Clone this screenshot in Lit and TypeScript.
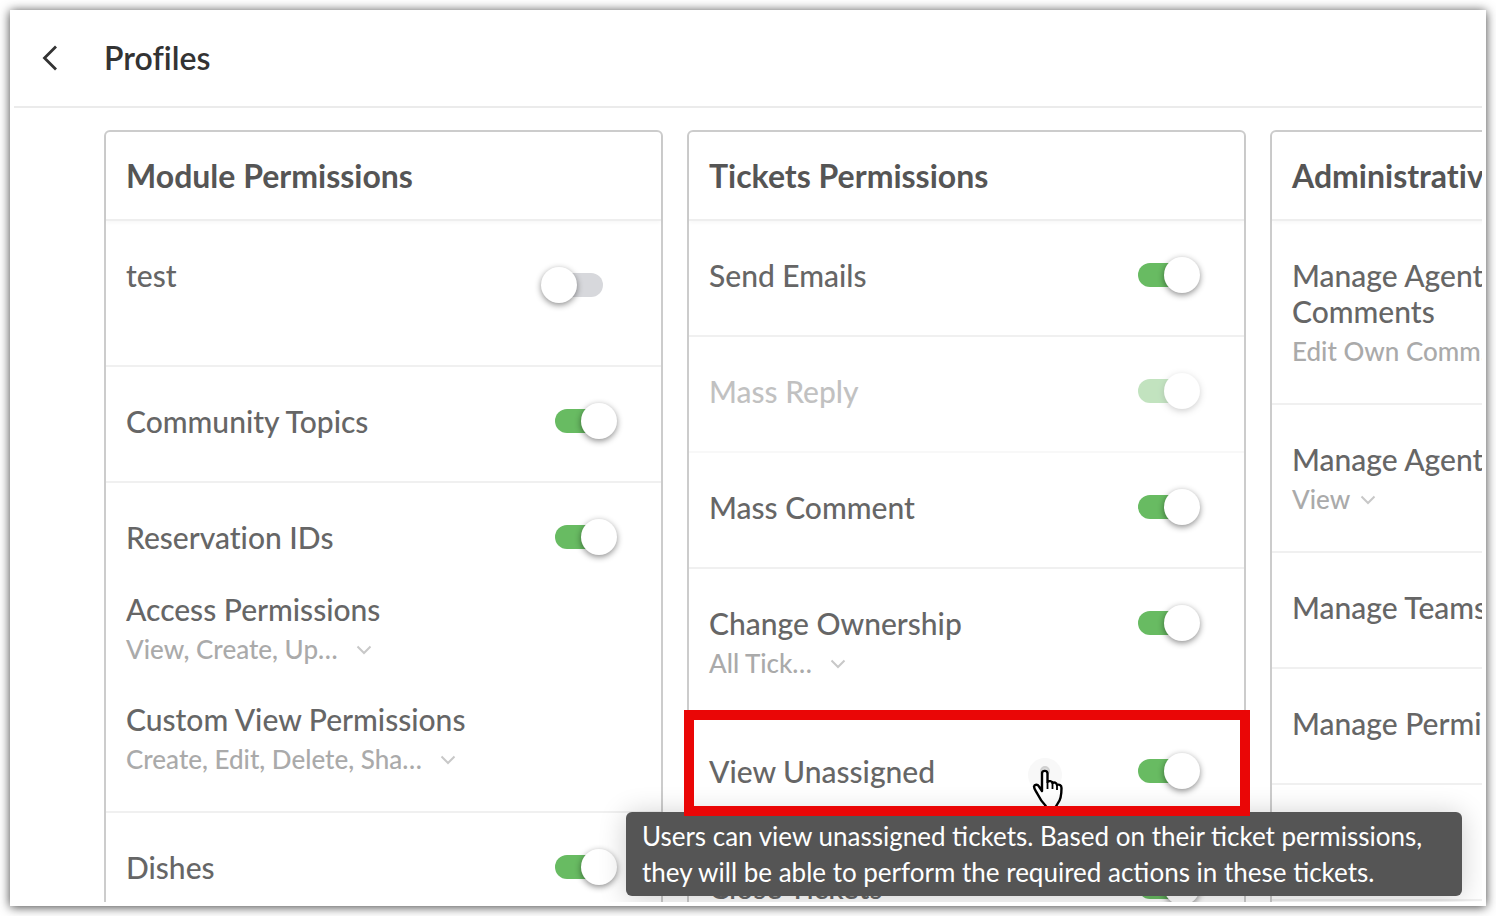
import { LitElement, html, css, svg, nothing } from "lit";
import { customElement, property } from "lit/decorators.js";

interface Entry {
  name: string;
  value?: string;
  fit?: boolean;
}
interface Permission extends Entry {
  on?: boolean;
  disabled?: boolean;
  offset?: boolean;
  tip?: string;
  extra?: Entry[];
}
interface Group {
  title: string;
  rows: Permission[];
}

const groups: Group[] = [
  {
    title: "Module Permissions",
    rows: [
      { name: "test", on: false, offset: true },
      { name: "Community Topics", on: true },
      {
        name: "Reservation IDs",
        on: true,
        extra: [
          { name: "Access Permissions", value: "View, Create, Up…" },
          { name: "Custom View Permissions", value: "Create, Edit, Delete, Sha…" },
        ],
      },
      { name: "Dishes", on: true },
    ],
  },
  {
    title: "Tickets Permissions",
    rows: [
      { name: "Send Emails", on: true },
      { name: "Mass Reply", on: true, disabled: true },
      { name: "Mass Comment", on: true },
      { name: "Change Ownership", on: true, value: "All Tick…" },
      {
        name: "View Unassigned",
        on: true,
        tip: "Users can view unassigned tickets. Based on their ticket permissions, they will be able to perform the required actions in these tickets.",
      },
      { name: "Close Tickets", on: true },
    ],
  },
  {
    title: "Administrative",
    rows: [
      { name: "Manage Agent\nComments", on: true, value: "Edit Own Comm…" },
      { name: "Manage Agents", on: true, value: "View", fit: true },
      { name: "Manage Teams", on: true },
      { name: "Manage Permissions", on: true },
      { name: "", on: true },
      { name: "", on: true },
    ],
  },
];

const chevron = svg`<svg class="chevron" width="16" height="12" viewBox="0 0 16 12" aria-hidden="true">
  <path d="M1.500 3.500 L8 10 L14.500 3.500" fill="none" stroke="#c8c8c8" stroke-width="2"/>
</svg>`;

@customElement("permission-row")
class PermissionRow extends LitElement {
  @property({ attribute: false }) item!: Permission;

  static styles = css`
    :host {
      display: block;
      position: relative;
    }
    .row {
      box-sizing: border-box;
      display: flex;
      justify-content: space-between;
      align-items: flex-start;
      min-height: 116px;
      padding: 36px 44px 36px 20px;
      border-bottom: 2px solid #f0f0f0;
    }
    .row.offset {
      min-height: 146px;
      padding-right: 58px;
    }
    .row.offset .switch {
      margin-top: 10px;
    }
    .row.disabled {
      opacity: 0.4;
    }
    .entries {
      display: grid;
      gap: 36px;
      max-width: 360px;
    }
    .name {
      display: block;
      font-size: 30px;
      font-weight: 500;
      line-height: 36px;
      color: #666;
      white-space: pre-line;
    }
    .picker {
      display: flex;
      align-items: center;
      gap: 18px;
      margin-top: 6px;
      padding: 0;
      border: 0;
      background: none;
      font: inherit;
      font-size: 26px;
      font-weight: 500;
      line-height: 32px;
      color: #aaa;
      white-space: nowrap;
    }
    .picker.fit {
      gap: 10px;
    }
    .switch {
      position: relative;
      flex: none;
      width: 62px;
      height: 36px;
    }
    .switch input {
      appearance: none;
      display: block;
      width: 54px;
      height: 24px;
      margin: 6px 0 6px 8px;
      border-radius: 12px;
      background: #d7d8dc;
    }
    .switch input:checked {
      margin-left: 0;
      background: #68bb62;
    }
    .switch input::after {
      content: "";
      position: absolute;
      left: 0;
      top: 0;
      width: 36px;
      height: 36px;
      border-radius: 50%;
      background: #fff;
      box-shadow: 0 2px 6px rgba(0, 0, 0, 0.45);
    }
    .switch input:checked::after {
      left: 26px;
    }
    .info {
      position: absolute;
      left: 339px;
      top: 41px;
      width: 36px;
      height: 48px;
    }
    .highlight {
      position: absolute;
      inset: -7px -6px 17px -5px;
      z-index: 3;
      border: 10px solid #ea0606;
      pointer-events: none;
    }
    .tip {
      position: absolute;
      left: -63px;
      top: 95px;
      z-index: 2;
      box-sizing: border-box;
      width: 836px;
      padding: 6px 16px;
      border-radius: 6px;
      background: #555;
      color: #fff;
      font-size: 26px;
      line-height: 36px;
      font-variant-ligatures: normal;
      box-shadow: 0 2px 28px rgba(0, 0, 0, 0.2);
    }
  `;

  private entry(e: Entry, forId?: string) {
    return html`<div>
      ${forId ? html`<label class="name" for=${forId}>${e.name}</label>` : html`<span class="name">${e.name}</span>`}
      ${e.value
        ? html`<button class="picker ${e.fit ? "fit" : ""}" aria-label="${e.name}: ${e.value}">${e.value}${chevron}</button>`
        : nothing}
    </div>`;
  }

  render() {
    const p = this.item;
    return html`
      <div class="row ${p.offset ? "offset" : ""} ${p.disabled ? "disabled" : ""}">
        <div class="entries">${this.entry(p, "toggle")}${(p.extra ?? []).map((e) => this.entry(e))}</div>
        <div class="switch">
          <input id="toggle" type="checkbox" role="switch" .checked=${!!p.on} ?disabled=${p.disabled} />
        </div>
      </div>
      ${p.tip
        ? html`
            <svg class="info" viewBox="0 0 36 48" aria-hidden="true">
              <circle cx="17" cy="17" r="17" fill="#f8f8f8" />
              <circle cx="17" cy="13" r="4" fill="#ddd" stroke="#d0d0d0" stroke-width="2" />
              <path
                d="M14 33V15.500C14 12 19.500 12 19.500 15.500V24C21 22.500 24 23 24.500 25C26 24 28.500 24.500 29 27C31 26 33.500 27 33.500 30C33.500 38 32.500 42 30 45L27 50H19L17 47C13 43 11 39 9.500 36C8 33 6 31 6 28.500C6.500 26.500 9.500 26 11 28.500Z"
                fill="#fff"
                stroke="#000"
                stroke-width="2.400"
                stroke-linejoin="round"
              />
              <path d="M19.500 24v7M24.500 25v6M29 27v5" fill="none" stroke="#000" stroke-width="1.800" />
            </svg>
            <div class="highlight"></div>
            <div class="tip" role="tooltip">${p.tip}</div>
          `
        : nothing}
    `;
  }
}

@customElement("app-root")
class AppRoot extends LitElement {
  static styles = css`
    :host {
      display: block;
      box-sizing: border-box;
      height: 100vh;
      padding: 10px;
      background: #fff;
      font-family: Lato, "Open Sans", sans-serif;
      font-variant-ligatures: none;
    }
    .window {
      box-sizing: border-box;
      height: 100%;
      padding: 4px;
      background: #fff;
      box-shadow: 0 1px 10px rgba(0, 0, 0, 0.75);
    }
    .screen {
      display: flex;
      flex-direction: column;
      height: 100%;
      overflow: hidden;
    }
    .bar {
      display: flex;
      flex: none;
      align-items: center;
      gap: 44px;
      height: 88px;
      padding: 0 0 4px 26px;
      border-bottom: 2px solid #ebebeb;
    }
    .back {
      display: flex;
      padding: 0;
      border: 0;
      background: none;
    }
    h1 {
      margin: 0;
      font-size: 32px;
      font-weight: 600;
      line-height: 40px;
      color: #333;
    }
    .board {
      display: flex;
      flex: 1;
      align-items: flex-start;
      gap: 24px;
      padding: 22px 0 0 90px;
    }
    .card {
      box-sizing: border-box;
      flex: 0 0 559px;
      border: 2px solid #ccc;
      border-radius: 6px;
    }
    h2 {
      margin: 0;
      padding: 24px 20px 23px;
      border-bottom: 2px solid #eee;
      box-shadow: 0 2px 4px rgba(0, 0, 0, 0.03);
      font-size: 32px;
      font-weight: 700;
      line-height: 40px;
      color: #555;
    }
  `;

  render() {
    return html`
      <div class="window">
        <div class="screen">
          <header class="bar">
            <button class="back" aria-label="Back">
              <svg width="20" height="28" viewBox="0 0 20 28" aria-hidden="true">
                <path d="M16 2.500 L4.500 14 L16 25.500" fill="none" stroke="#333" stroke-width="2.800" />
              </svg>
            </button>
            <h1>Profiles</h1>
          </header>
          <main class="board">
            ${groups.map(
              (g) => html`<section class="card">
                <h2>${g.title}</h2>
                ${g.rows.map((r) => html`<permission-row .item=${r}></permission-row>`)}
              </section>`
            )}
          </main>
        </div>
      </div>
    `;
  }
}
